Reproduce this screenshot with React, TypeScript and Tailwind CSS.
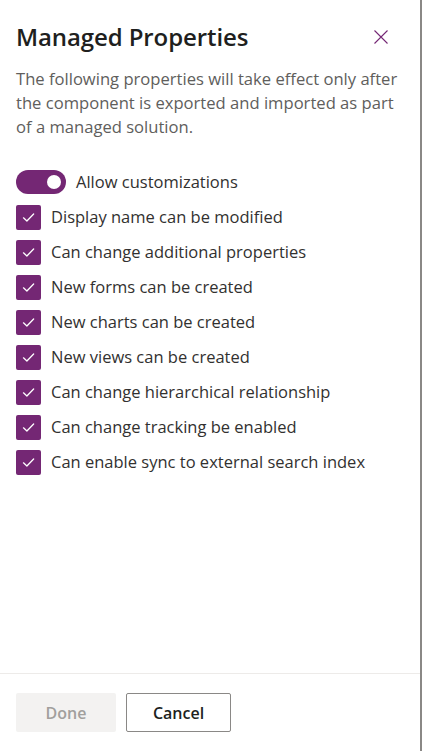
import React, { useState } from "react";

const options = [
  "Display name can be modified",
  "Can change additional properties",
  "New forms can be created",
  "New charts can be created",
  "New views can be created",
  "Can change hierarchical relationship",
  "Can change tracking be enabled",
  "Can enable sync to external search index",
];

const CheckIcon = () => (
  <svg width="15" height="15" viewBox="0 0 14 14" fill="none">
    <path d="M2.3 7.3 L5.5 10.3 L11.8 3.7" stroke="white" strokeWidth="1.2" strokeLinecap="round" strokeLinejoin="round" />
  </svg>
);

const App = () => {
  const [checked, setChecked] = useState(options.map(() => true));
  const [allow, setAllow] = useState(true);

  return (
    <div
      className="w-[422px] h-[751px] bg-white flex"
      style={{ fontFamily: '"Segoe UI", "Open Sans", "Noto Sans", sans-serif' }}
    >
      <div className="flex-1 flex flex-col">
        <div className="flex-1 px-4">
          {/* Header */}
          <div className="flex items-center justify-between pt-[18px]">
            <h1 className="text-[24px] font-semibold text-[#201f1e] leading-[38px] tracking-[-0.1px]">Managed Properties</h1>
            <button className="w-8 h-8 mr-[7px] flex items-center justify-center text-[#742774]">
              <svg width="16" height="16" viewBox="0 0 16 16" fill="none">
                <path d="M1.5 1.5 L14.5 14.5 M14.5 1.5 L1.5 14.5" stroke="currentColor" strokeWidth="1.1" />
              </svg>
            </button>
          </div>
          <p className="mt-[11px] text-[16.6px] leading-6 text-[#605e5c]">
            The following properties will take effect only after the component is exported and imported as part of a
            managed solution.
          </p>

          {/* Toggle */}
          <div className="mt-[30px] flex items-center gap-[10px] h-[26px]">
            <button
              onClick={() => setAllow(!allow)}
              className={`w-[50px] h-6 rounded-full flex items-center px-[5px] ${
                allow ? "bg-[#742774] justify-end" : "bg-white border border-[#605e5c] justify-start"
              }`}
            >
              <span className="w-[14px] h-[14px] rounded-full bg-white" />
            </button>
            <span className="text-[16.5px] text-[#323130]">Allow customizations</span>
          </div>

          {/* Checkboxes */}
          <div className="mt-[10px] flex flex-col gap-[11px]">
            {options.map((label, i) => (
              <label key={label} className="flex items-center gap-[10px] h-6 cursor-pointer">
                <span
                  onClick={() => setChecked(checked.map((c, j) => (j === i ? !c : c)))}
                  className={`w-[25px] h-[25px] rounded-[2px] flex items-center justify-center ${
                    checked[i] ? "bg-[#742774]" : "border border-[#323130]"
                  }`}
                >
                  {checked[i] && <CheckIcon />}
                </span>
                <span className="text-[16.5px] text-[#323130]">{label}</span>
              </label>
            ))}
          </div>
        </div>

        {/* Footer */}
        <div className="border-t border-[#edebe9] h-[78px] px-4 flex items-center gap-[10px]">
          <button
            disabled
            className="w-[100px] h-[39px] rounded-[2px] bg-[#f3f2f1] text-[#a19f9d] text-[16px] font-semibold"
          >
            Done
          </button>
          <button className="w-[105px] h-[39px] rounded-[2px] border border-[#8a8886] bg-white text-[#201f1e] text-[16px] font-semibold">
            Cancel
          </button>
        </div>
      </div>
      <div className="w-[2px] bg-[#8a8886]" />
    </div>
  );
};

export default App;
